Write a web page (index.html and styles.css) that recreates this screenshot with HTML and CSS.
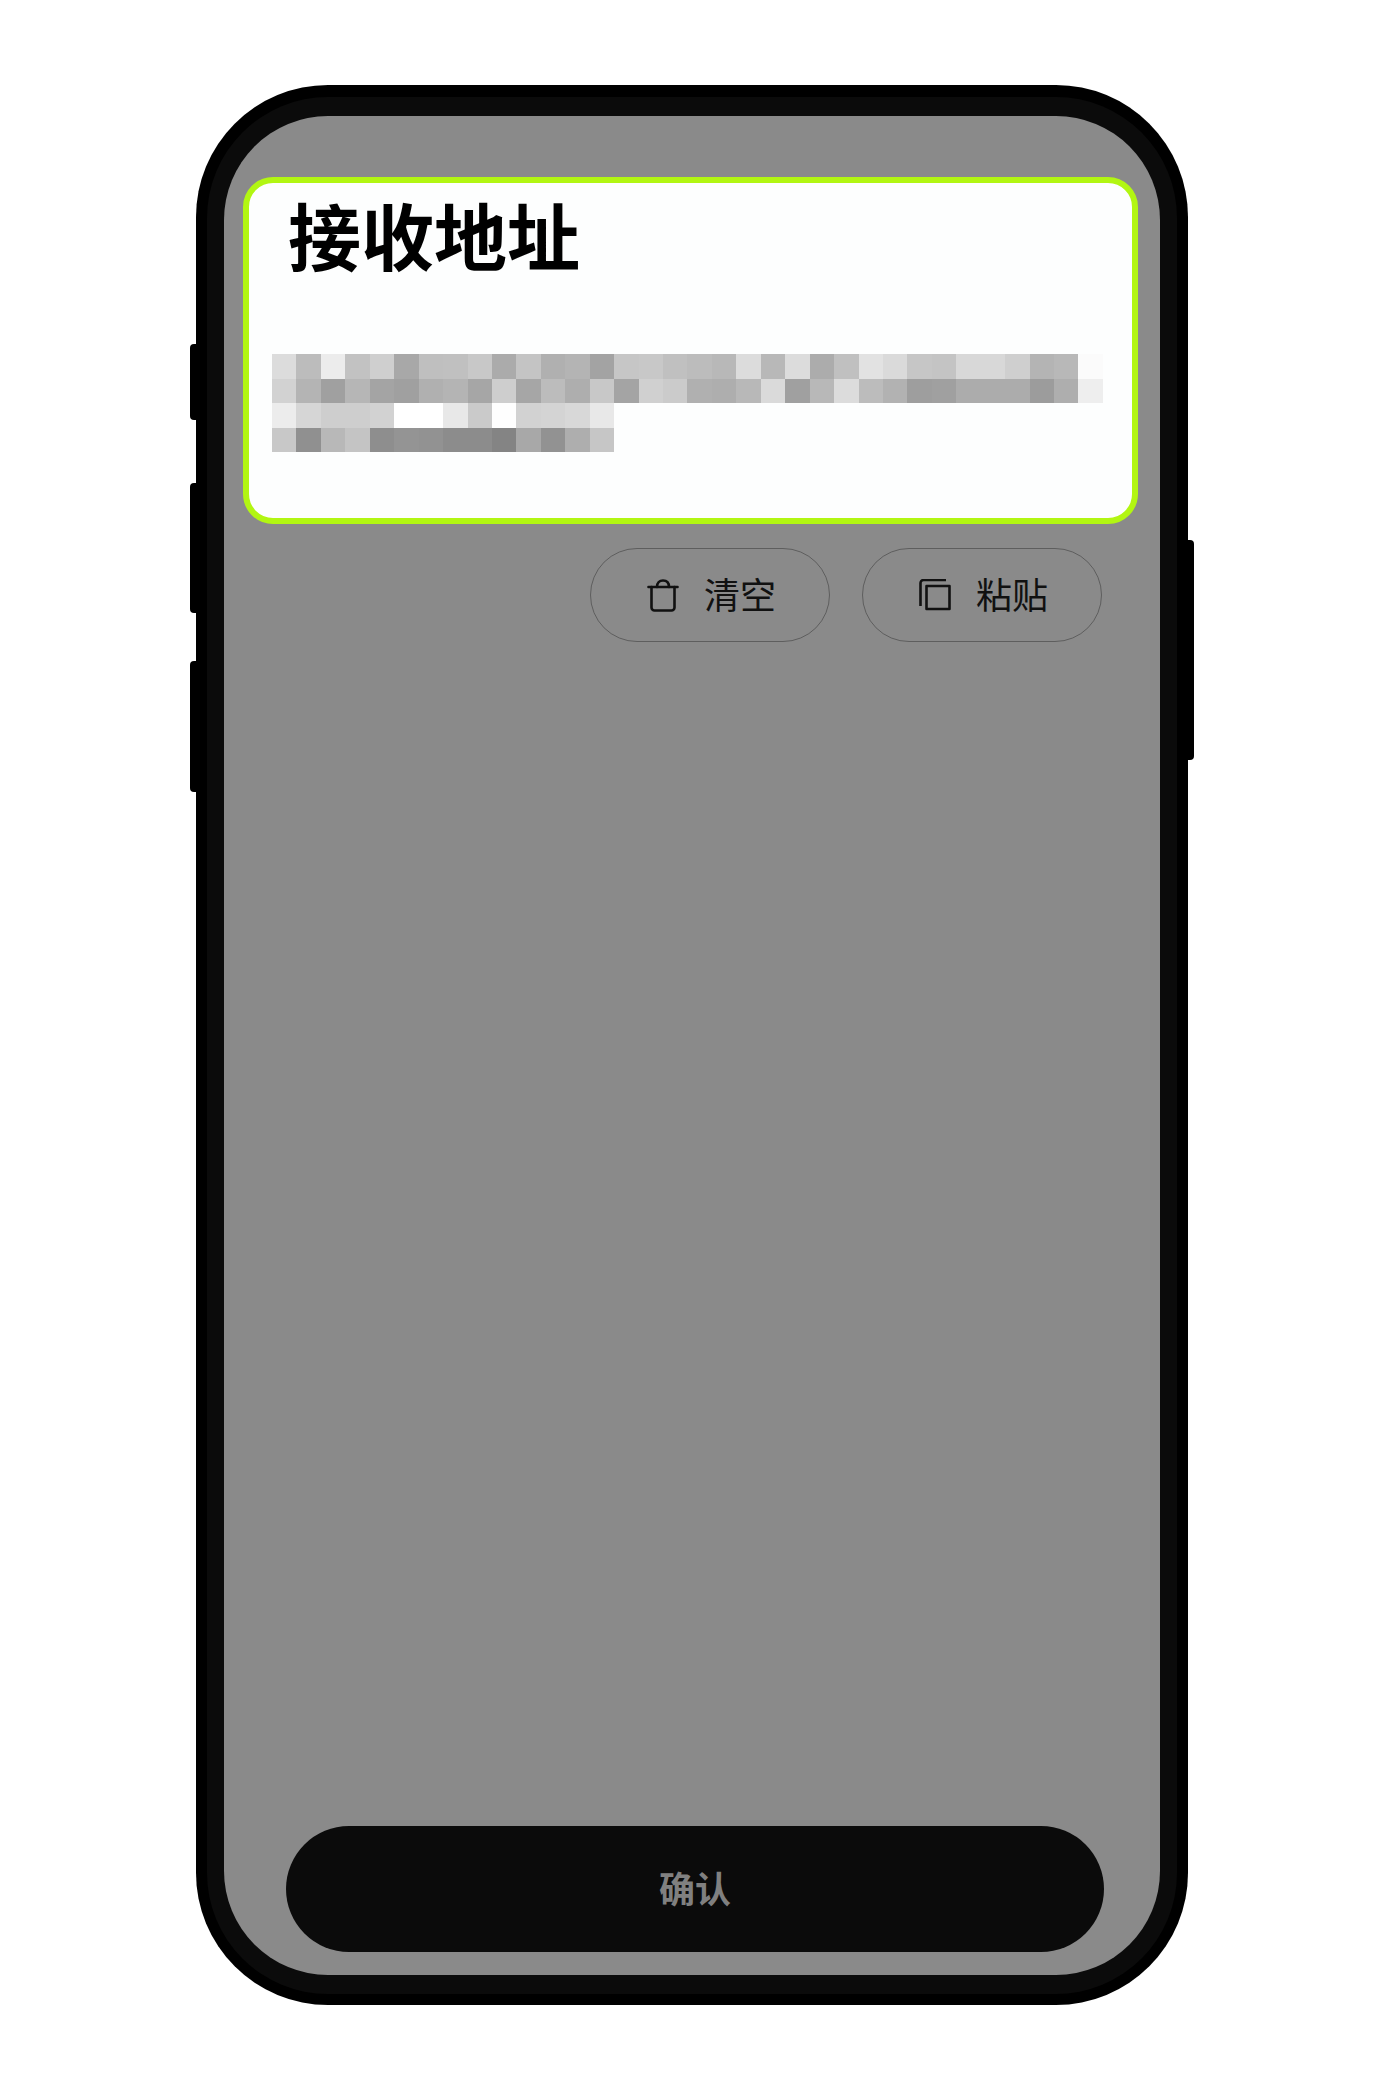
FILE: index.html
```html
<!DOCTYPE html>
<html lang="zh-CN">

<head>
  <meta charset="UTF-8">
  <meta name="viewport" content="width=device-width, initial-scale=1.0">
  <title>接收地址</title>
  <link rel="stylesheet" href="styles.css">
</head>

<body>
  <div class="phone">
    <span class="side-btn side-left mute"></span>
    <span class="side-btn side-left vol-up"></span>
    <span class="side-btn side-left vol-down"></span>
    <span class="side-btn side-right power"></span>

    <div class="bezel">
      <main class="screen">
        <!-- 地址卡片 -->
        <section class="address-card">
          <h1 class="card-title">接收地址</h1>
          <div class="mosaic" id="mosaic"></div>
        </section>

        <div class="actions">
          <button class="pill-btn">
            <svg class="icon" width="32" height="33" viewBox="0 0 32 33" fill="none" stroke="#111" stroke-width="2.6" stroke-linecap="round" stroke-linejoin="round">
              <path d="M1.500 8H30.500" />
              <path d="M4.500 8V28.500a3 3 0 0 0 3 3H24.500a3 3 0 0 0 3-3V8" />
              <path d="M10 8C10 3.500 12.500 1.500 16 1.500S22 3.500 22 8" />
            </svg>
            <span class="pill-label">清空</span>
          </button>
          <button class="pill-btn">
            <svg class="icon" width="32" height="33" viewBox="0 0 32 33" fill="none" stroke="#111" stroke-width="2.6" stroke-linejoin="round">
              <path d="M1.500 27V4a3 3 0 0 1 3-3H27" />
              <rect x="7.500" y="7" width="23" height="23" />
            </svg>
            <span class="pill-label">粘贴</span>
          </button>
        </div>

        <button class="confirm-btn">确认</button>
      </main>
    </div>
  </div>

  <script>
    // 打码区域的灰度数据,每行一个数组
    const rows = [
      ['dc', 'bc', 'ec', 'c2', 'cf', 'a8', 'bf', 'c0', 'c8', 'ab', 'c4', 'b0', 'b4', 'a3', 'c6', 'c8', 'c0', 'bc', 'b8', 'dc', 'b8', 'dc', 'ac', 'c0', 'e2', 'da', 'c6', 'c4', 'd8', 'd8', 'cf', 'b4', 'b8', 'fb'],
      ['d2', 'b4', 'a0', 'b6', 'a4', 'a0', 'b0', 'b4', 'a6', 'ce', 'a6', 'bc', 'ae', 'c8', 'a4', 'd0', 'cb', 'b0', 'ae', 'b8', 'da', 'a0', 'b8', 'dc', 'bc', 'b2', '9e', 'a0', 'ac', 'ac', 'ac', '9c', 'ae', 'ee'],
      ['ec', 'd6', 'ce', 'ce', 'd2', 'ff', 'ff', 'e8', 'ca', 'fe', 'd2', 'd4', 'd8', 'e8'],
      ['c8', '90', 'b8', 'c4', '8e', '94', '92', '8c', '8c', '84', 'a8', '92', 'ae', 'c6']
    ];

    const mosaic = document.getElementById('mosaic');
    rows.forEach((row) => {
      row.forEach((gray) => {
        const cell = document.createElement('i');
        cell.className = 'mosaic-cell';
        cell.style.background = `#${gray}${gray}${gray}`;
        mosaic.appendChild(cell);
      });
      // 补齐短行
      for (let i = row.length; i < 34; i++) {
        mosaic.appendChild(document.createElement('i'));
      }
    });
  </script>
</body>

</html>
```

FILE: styles.css
```css
* {
  margin: 0;
  padding: 0;
  box-sizing: border-box;
}

body {
  width: 1384px;
  height: 2080px;
  padding: 85px 0 0 196px;
  background: #fff;
  font-family: "Noto Sans CJK SC", "Noto Sans", sans-serif;
  overflow: hidden;
}

/* 手机外框 */
.phone {
  position: relative;
  width: 992px;
  height: 1920px;
  padding: 12px 11px 11px;
  background: #000;
  border-radius: 132px;
}

.bezel {
  height: 100%;
  padding: 19px 17px;
  background: #0b0b0b;
  border-radius: 121px;
}

.side-btn {
  position: absolute;
  width: 8px;
  background: #000;
}

.side-left {
  left: -6px;
  border-radius: 4px 0 0 4px;
}

.side-right {
  right: -6px;
  border-radius: 0 4px 4px 0;
}

.mute {
  top: 259px;
  height: 76px;
}

.vol-up {
  top: 398px;
  height: 130px;
}

.vol-down {
  top: 576px;
  height: 131px;
}

.power {
  top: 455px;
  height: 220px;
}

/* 屏幕 */
.screen {
  display: flex;
  flex-direction: column;
  height: 100%;
  background: #8a8a8a;
  border-radius: 104px;
}

.address-card {
  height: 347px;
  margin: 61px 22px 0 19px;
  padding-left: 23px;
  background: #fdfefe;
  border: 6px solid #b2f612;
  border-radius: 30px;
}

.card-title {
  height: 171px;
  padding-left: 16px;
  color: #000;
  font-size: 73px;
  font-weight: 700;
  line-height: 100px;
}

.mosaic {
  display: grid;
  grid-template-columns: repeat(34, 24.44px);
  grid-auto-rows: 24.5px;
}

.mosaic-cell {
  display: block;
}

/* 清空 / 粘贴 */
.actions {
  display: flex;
  justify-content: flex-end;
  gap: 32px;
  margin: 24px 58px 0 0;
}

.pill-btn {
  display: flex;
  align-items: center;
  justify-content: center;
  gap: 25px;
  width: 240px;
  height: 94px;
  padding-left: 3px;
  background: transparent;
  border: 1.5px solid #5e5e5e;
  border-radius: 47px;
  color: #111;
  font-family: inherit;
  font-size: 36px;
}

.pill-label {
  margin-bottom: 4px;
}

/* 确认 */
.confirm-btn {
  height: 126px;
  margin: auto 56px 23px 62px;
  padding-bottom: 4px;
  background: #0b0b0b;
  border: none;
  border-radius: 63px;
  color: #808080;
  font-family: inherit;
  font-size: 36px;
  font-weight: 700;
}
```
